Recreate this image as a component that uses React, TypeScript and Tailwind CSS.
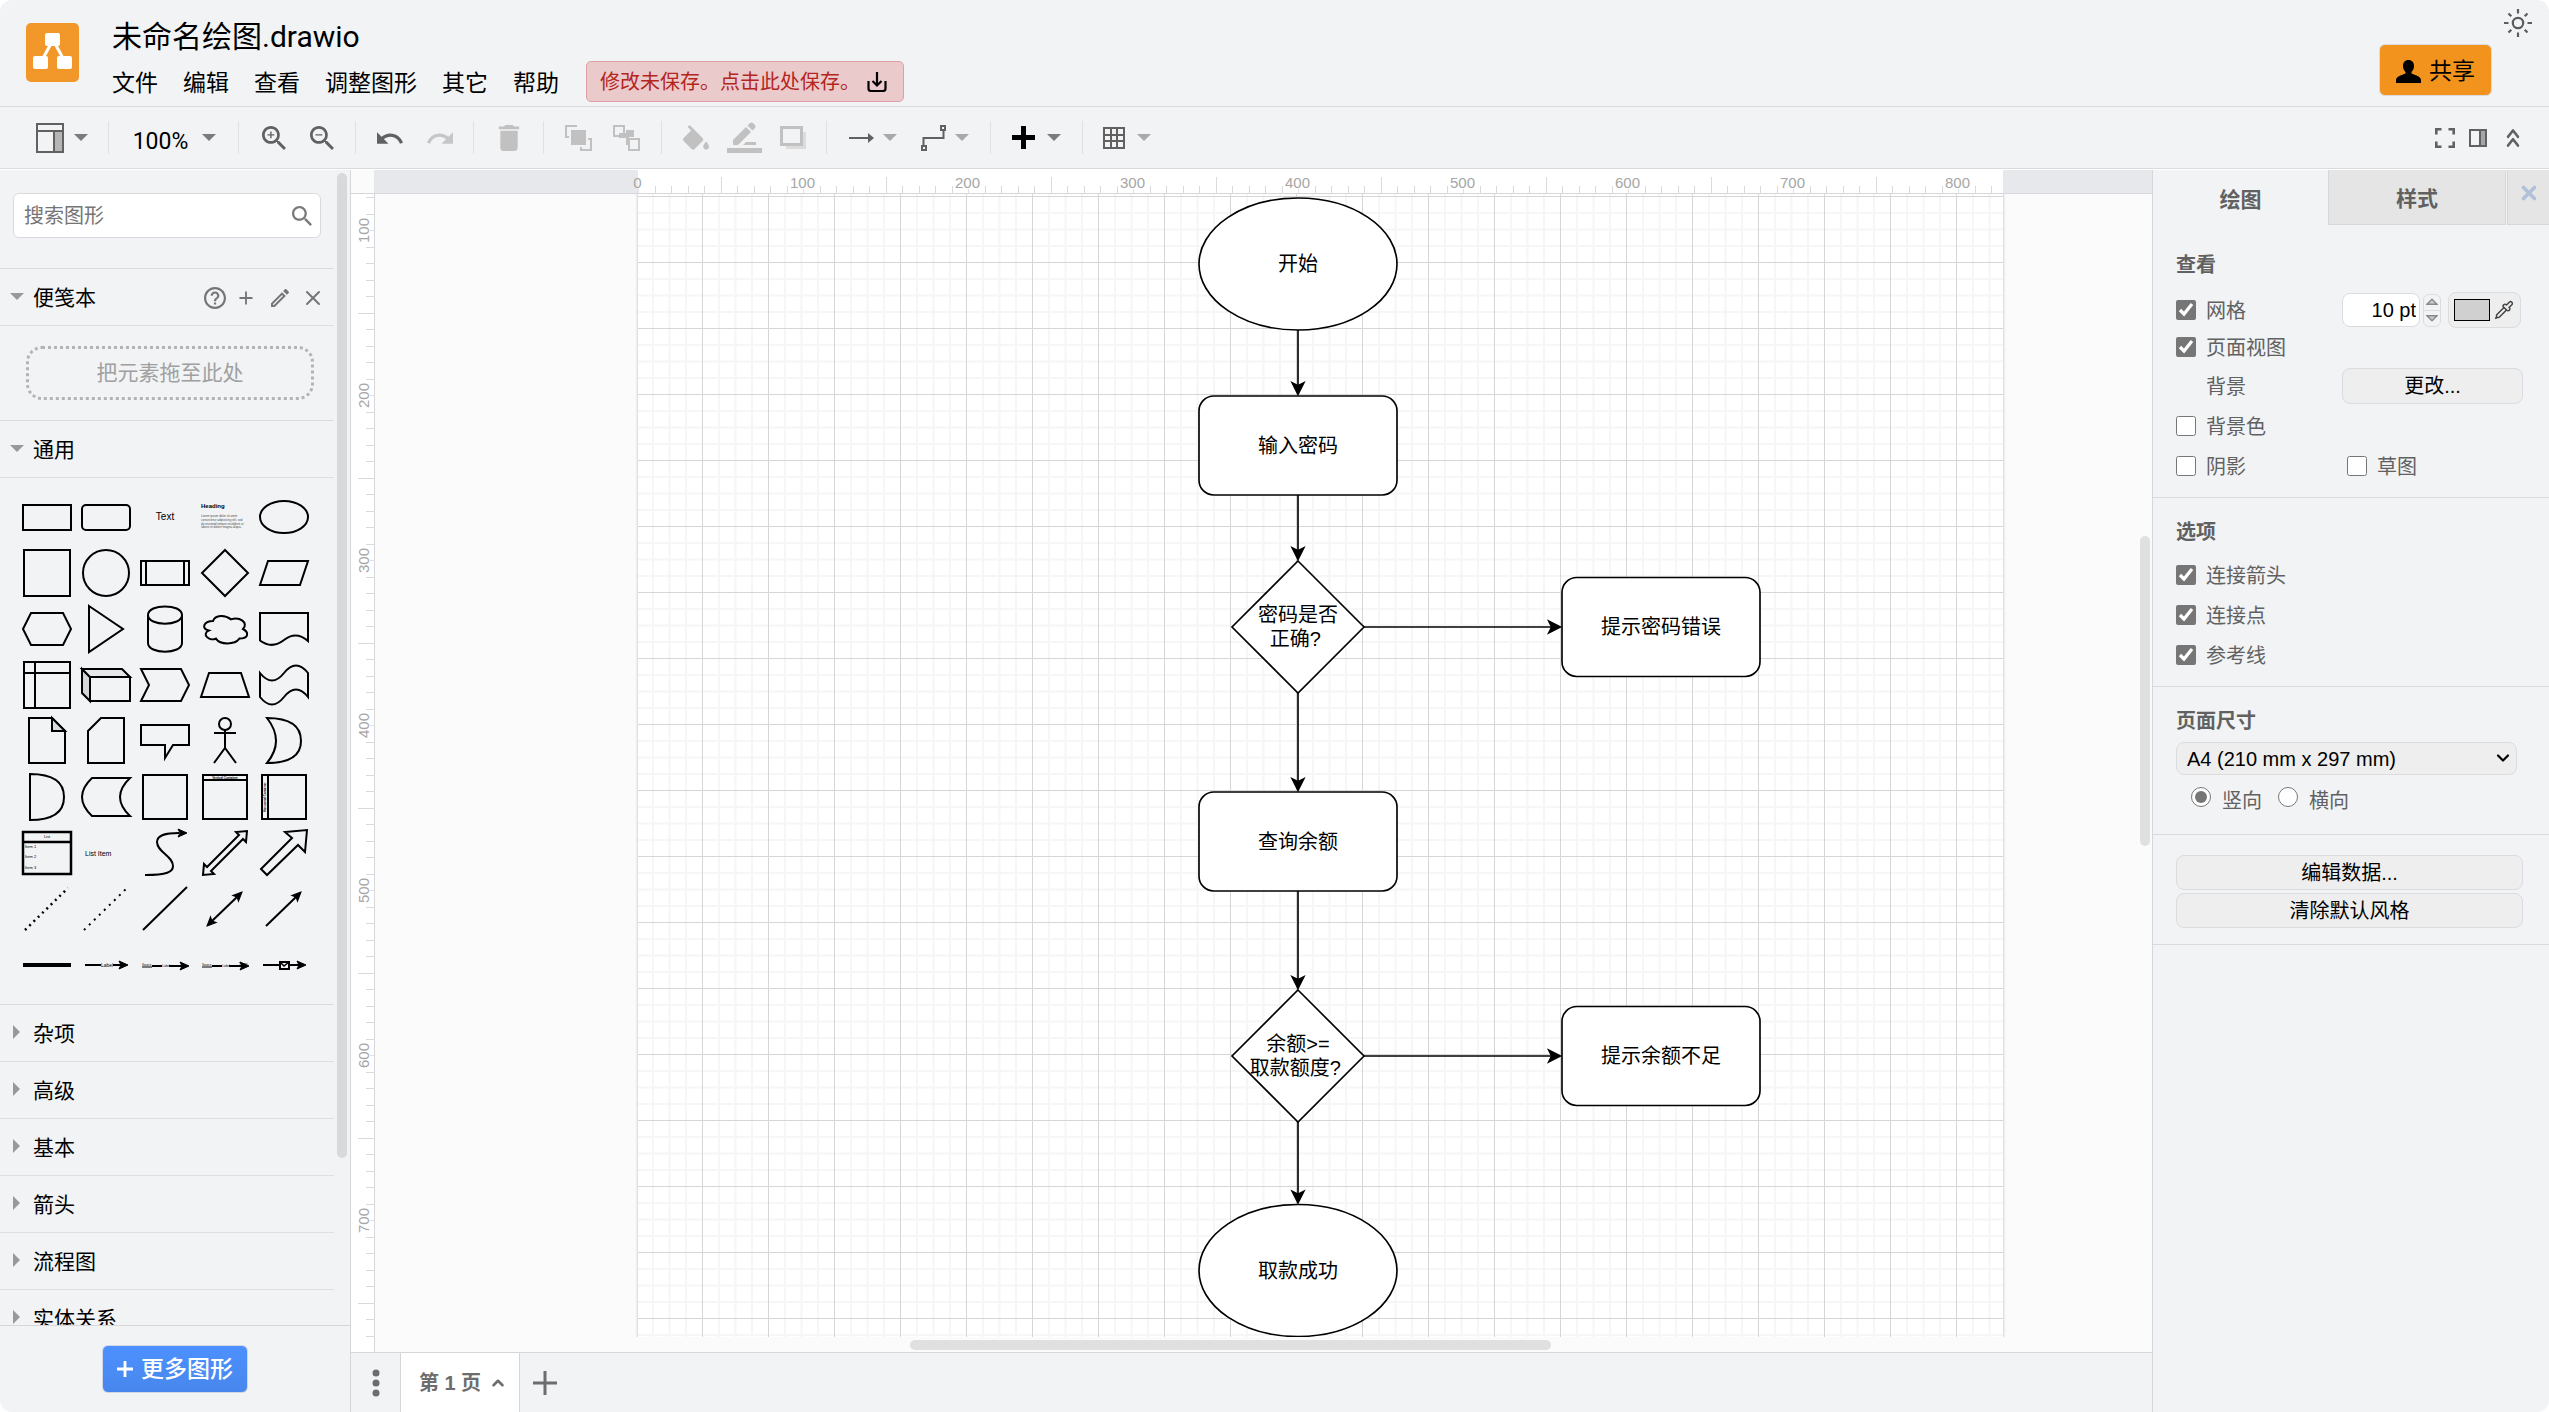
import { useState, type ReactNode } from 'react';
import { ChevronDown, ChevronUp, ChevronsUp, Pipette, Plus, X } from 'lucide-react';

const SCALE = 1.65;
const PAGE_W = 1365;
const PAGE_H = 1143;
const PAGE_TOP = 128;

const MENUS = ['文件', '编辑', '查看', '调整图形', '其它', '帮助'];
const SECTIONS = ['杂项', '高级', '基本', '箭头', '流程图', '实体关系'];

const ZOOM_D =
  'M15.5 14h-.79l-.28-.27C15.41 12.59 16 11.11 16 9.5 16 5.91 13.09 3 9.5 3S3 5.91 3 9.5 5.91 16 9.5 16c1.61 0 3.09-.59 4.23-1.57l.27.28v.79l5 4.99L20.49 19l-4.99-5zm-6 0C7.01 14 5 11.99 5 9.5S7.01 5 9.5 5 14 7.01 14 9.5 11.99 14 9.5 14z';

function Icon({ d, box, className }: { d: string; box: string; className: string }) {
  return (
    <svg viewBox={box} fill="currentColor" className={className} aria-hidden="true">
      <path d={d} />
    </svg>
  );
}

function Caret({ className = 'text-[#a9a9a9]' }: { className?: string }) {
  return <Icon d="M0 0H14L7 7Z" box="0 0 14 7" className={`h-[7px] w-3.5 shrink-0 ${className}`} />;
}

function Group({ className, children }: { className: string; children: ReactNode }) {
  return (
    <div className={`flex h-[33px] shrink-0 items-center justify-center border-r border-[#dfe1e4] ${className}`}>
      {children}
    </div>
  );
}

function Tool({ label, children, className = '' }: { label: string; children: ReactNode; className?: string }) {
  return (
    <button type="button" aria-label={label} className={`flex items-center ${className}`}>
      {children}
    </button>
  );
}

function Header() {
  return (
    <header className="flex h-[107px] shrink-0 items-start border-b border-[#d8dade] pl-[26px]">
      <svg viewBox="0 0 53 59" className="mt-[23px] h-[59px] w-[53px]" aria-hidden="true">
        <rect width="53" height="59" rx="5" fill="#f29729" />
        <path d="M27 17L16 37M27 17L38 37" stroke="#fff" strokeWidth="3" fill="none" />
        <rect x="19" y="10" width="15" height="13" rx="2" fill="#fff" />
        <rect x="7" y="33" width="15" height="13" rx="2" fill="#fff" />
        <rect x="31" y="33" width="15" height="13" rx="2" fill="#fff" />
      </svg>
      <div className="ml-[33px] pt-[15px]">
        <h1 className="font-['Roboto','Noto_Sans_CJK_SC',sans-serif] text-[30px] leading-[44px]">未命名绘图.drawio</h1>
        <div className="flex h-[45px] items-center">
          <nav className="flex gap-[25px] pt-1 text-[23px] leading-[41px]">
            {MENUS.map((m) => (
              <button type="button" key={m}>{m}</button>
            ))}
          </nav>
          <button
            type="button"
            className="ml-[27px] flex h-[41px] items-center gap-[7px] rounded-[5px] border border-[#dea0a5] bg-[#ebcacc] pr-4 pl-[13px] text-[20px] text-[#b3261e]"
          >
            修改未保存。点击此处保存。
            <svg viewBox="0 0 20 20" className="h-5 w-5 text-black" fill="none" stroke="currentColor" strokeWidth="2.2" aria-hidden="true">
              <path d="M1.500 9V16.500Q1.500 19 4 19H16Q18.500 19 18.500 16.500V9M10 0V13M5.500 9L10 13.500L14.500 9" />
            </svg>
          </button>
        </div>
      </div>
      <button
        type="button"
        className="mt-11 ml-auto flex h-[52px] w-[113px] items-center justify-center gap-2 rounded-md border border-[#d9dce0] bg-[#f2931e] pt-0.5 text-[23px]"
      >
        <Icon
          d="M12.500 0C16 0 18 2.500 18 6C18 8.500 17 10.500 15.500 12V13.500C19 15 25 16.500 25 20V23H0V20C0 16.500 6 15 9.500 13.500V12C8 10.500 7 8.500 7 6C7 2.500 9 0 12.500 0Z"
          box="0 0 25 23"
          className="h-[23px] w-[25px]"
        />
        共享
      </button>
      <button type="button" aria-label="外观" className="mt-[9px] mr-[17px] ml-3 text-[#5c5c5c]">
        <svg viewBox="-14 -14 28 28" className="h-7 w-7" fill="none" stroke="currentColor" strokeWidth="2.2" aria-hidden="true">
          <circle r="5.2" />
          <path d="M0-14V-9.500M0 14V9.500M-14 0H-9.500M14 0H9.500M-9.500-9.500L-6.700-6.700M9.500-9.500L6.700-6.700M-9.500 9.500L-6.700 6.700M9.500 9.500L6.700 6.700" />
        </svg>
      </button>
    </header>
  );
}

function Toolbar() {
  return (
    <div className="mt-0.5 flex h-[60px] shrink-0 items-center border-b border-[#d8dade] bg-[#f1f3f5] pb-0.5 text-[#616161]">
      <Group className="w-[109px] gap-2.5 pl-4">
        <Tool label="视图" className="gap-2.5">
          <svg viewBox="0 0 28 30" className="h-[30px] w-7" fill="none" stroke="currentColor" strokeWidth="2" aria-hidden="true">
            <rect x="19" y="9" width="8" height="20" fill="#b5b5b5" stroke="none" />
            <path d="M1 1H27V29H1ZM1 8H27M18 8V29" />
          </svg>
          <Caret className="text-[#7b7b7b]" />
        </Tool>
      </Group>
      <Group className="w-[130px]">
        <button type="button" className="flex items-center gap-3.5 pl-0.5 text-black">
          <span className="pt-[7px] font-['Roboto','Noto_Sans_CJK_SC',sans-serif] text-[23px] leading-[33px]">100%</span>
          <Caret className="text-[#7b7b7b]" />
        </button>
      </Group>
      <Group className="w-[117px] gap-6 pl-0.5">
        <Tool label="放大"><Icon d={`${ZOOM_D}M12 10h-2v2H9v-2H7V9h2V7h1v2h2v1z`} box="3 3 17.5 17.5" className="h-6 w-6" /></Tool>
        <Tool label="缩小"><Icon d={`${ZOOM_D}M7 9h5v1H7z`} box="3 3 17.5 17.5" className="h-6 w-6" /></Tool>
      </Group>
      <Group className="w-[118px] gap-6">
        <Tool label="撤消">
          <Icon d="M12.500 8c-2.650 0-5.050.990-6.900 2.600L2 7v9h9l-3.620-3.620c1.390-1.160 3.160-1.880 5.120-1.880 3.540 0 6.550 2.310 7.600 5.500l2.370-.780C21.080 11.030 17.150 8 12.500 8z" box="2 7 20.5 9" className="h-3 w-[26px]" />
        </Tool>
        <Tool label="重做" className="text-[#c6c6c6]">
          <Icon d="M18.400 10.600C16.550 8.990 14.150 8 11.500 8c-4.650 0-8.580 3.030-9.960 7.220L3.900 16c1.050-3.190 4.050-5.500 7.600-5.500 1.950 0 3.730.720 5.120 1.880L13 16h9V7l-3.600 3.600z" box="1.5 7 20.5 9" className="h-3 w-[26px]" />
        </Tool>
      </Group>
      <Group className="w-[70px] text-[#c1c1c1]">
        <Tool label="删除">
          <Icon d="M6 19c0 1.100.900 2 2 2h8c1.100 0 2-.900 2-2V7H6v12zM19 4h-3.500l-1-1h-5l-1 1H5v2h14V4z" box="4 3 16 18" className="h-[26px] w-6" />
        </Tool>
      </Group>
      <Group className="w-[118px] gap-[21px] text-[#c1c1c1]">
        <Tool label="移至最前">
          <svg viewBox="0 0 27 26" className="h-[26px] w-[27px]" fill="none" stroke="currentColor" strokeWidth="2" aria-hidden="true">
            <path d="M11 2V1H1V12H4M16 22V25H26V14H23" />
            <rect x="6" y="5" width="15" height="15" fill="currentColor" stroke="none" />
          </svg>
        </Tool>
        <Tool label="移至最后">
          <svg viewBox="0 0 27 26" className="h-[26px] w-[27px]" fill="none" stroke="currentColor" strokeWidth="2" aria-hidden="true">
            <path d="M13 5H21V12H16V20H13V13H6V8H13Z" fill="currentColor" stroke="none" />
            <path d="M1 1H11V11H1ZM16 14H26V25H16Z" />
          </svg>
        </Tool>
      </Group>
      <Group className="w-[165px] gap-[18px] text-[#c1c1c1]">
        <Tool label="填充颜色">
          <Icon d="M16.560 8.940L7.620 0 6.210 1.410l2.380 2.380-5.150 5.150c-.590.590-.590 1.540 0 2.120l5.500 5.500c.290.290.680.440 1.060.440s.770-.150 1.060-.440l5.500-5.500c.590-.580.590-1.530 0-2.120zM19 11.500s-2 2.170-2 3.500c0 1.100.900 2 2 2s2-.900 2-2c0-1.330-2-3.500-2-3.500z" box="3 0 18 18" className="h-[26px] w-[26px]" />
        </Tool>
        <Tool label="线条颜色">
          <svg viewBox="0 0 35 31" className="h-[31px] w-[35px]" fill="currentColor" aria-hidden="true">
            <path d="M6 18L19 5L24 10L11 23H6ZM20.500 3.500L23 1Q24.500 0 26 1L28 3Q29 4.500 28 6L25.500 8.500ZM16 23L19 20H29V23Z" />
            <rect y="26" width="35" height="5" />
          </svg>
        </Tool>
        <Tool label="阴影">
          <svg viewBox="0 0 26 23" className="h-[23px] w-[26px]" aria-hidden="true">
            <rect x="6" y="6" width="20" height="17" fill="#dcdcdc" />
            <rect x="1.5" y="1.5" width="20" height="17" fill="#f1f3f5" stroke="currentColor" strokeWidth="3" />
          </svg>
        </Tool>
      </Group>
      <Group className="w-[164px] gap-6">
        <Tool label="连线" className="gap-[9px]">
          <svg viewBox="0 0 25 10" className="h-2.5 w-[25px]" aria-hidden="true">
            <path d="M0 5H20" stroke="currentColor" strokeWidth="2" />
            <path d="M19 0L25 5L19 10Z" fill="currentColor" />
          </svg>
          <Caret />
        </Tool>
        <Tool label="航点" className="gap-[9px]">
          <svg viewBox="0 0 25 26" className="h-[26px] w-[25px]" fill="none" stroke="currentColor" strokeWidth="2" aria-hidden="true">
            <path d="M2.500 20V13H22.500V6M1 21H5V25H1ZM20 1H24V5H20Z" />
          </svg>
          <Caret />
        </Tool>
      </Group>
      <Group className="w-[92px]">
        <Tool label="插入" className="gap-3 text-black">
          <Icon d="M9 0H14V9H23V14H14V23H9V14H0V9H9Z" box="0 0 23 23" className="h-[23px] w-[23px]" />
          <Caret className="text-[#7b7b7b]" />
        </Tool>
      </Group>
      <Tool label="表格" className="ml-5 gap-3">
        <svg viewBox="0 0 22 22" className="h-[22px] w-[22px]" fill="none" stroke="currentColor" strokeWidth="2" aria-hidden="true">
          <path d="M1 1H21V21H1ZM8 1V21M14 1V21M1 8H21M1 14H21" />
        </svg>
        <Caret />
      </Tool>
      <div className="mr-6 ml-auto flex items-center gap-3.5">
        <Tool label="全屏">
          <svg viewBox="0 0 20 20" className="h-5 w-5" fill="none" stroke="currentColor" strokeWidth="2.6" aria-hidden="true">
            <path d="M1.300 6.500V1.300H6.500M13.500 1.300H18.700V6.500M18.700 13.500V18.700H13.500M6.500 18.700H1.300V13.500" />
          </svg>
        </Tool>
        <Tool label="格式">
          <svg viewBox="0 0 18 18" className="h-[18px] w-[18px]" fill="none" stroke="currentColor" strokeWidth="2" aria-hidden="true">
            <rect x="11" y="1" width="6" height="16" fill="#a5a5a5" />
            <rect x="1" y="1" width="16" height="16" />
          </svg>
        </Tool>
        <Tool label="收缩/展开">
          <ChevronsUp className="h-[30px] w-6" strokeWidth={2.4} preserveAspectRatio="none" />
        </Tool>
      </div>
    </div>
  );
}

// Arrow head with its tip at x, y
function Head({ x, y, angle = 0 }: { x: number; y: number; angle?: number }) {
  return <path d="M0 0L-9-4L-7 0L-9 4Z" fill="#000" strokeWidth="1" transform={`translate(${x} ${y}) rotate(${angle})`} />;
}

function Tiny({ x, y, size, children, bold, middle }: { x: number; y: number; size: number; children: string; bold?: boolean; middle?: boolean }) {
  return (
    <text x={x} y={y} fontSize={size} fontWeight={bold ? 700 : 400} textAnchor={middle ? 'middle' : 'start'} fill="#000" stroke="none">
      {children}
    </text>
  );
}

const SHAPES: ReactNode[] = [
  <rect x="-24" y="-12" width="48" height="25" />,
  <rect x="-24" y="-12" width="48" height="25" rx="4" />,
  <Tiny x={0} y={3} size={10} middle>Text</Tiny>,
  <>
    <Tiny x={-24} y={-9} size={6} bold>Heading</Tiny>
    <g opacity="0.7">
      <Tiny x={-24} y={0} size={3}>Lorem ipsum dolor sit amet</Tiny>
      <Tiny x={-24} y={4} size={3}>consectetur adipisicing elit, sed</Tiny>
      <Tiny x={-24} y={8} size={3}>do eiusmod tempor incididunt ut</Tiny>
      <Tiny x={-24} y={11} size={3}>labore et dolore magna aliqua.</Tiny>
    </g>
  </>,
  <ellipse rx="24" ry="16" />,
  <rect x="-23" y="-23" width="46" height="46" />,
  <circle r="23" />,
  <path d="M-24-12H24V12H-24ZM-19-12V12M19-12V12" />,
  <path d="M0-23L23 0L0 23L-23 0Z" />,
  <path d="M-24 12L-16-12H24L16 12Z" />,
  <path d="M-24 0L-16-16H16L24 0L16 16H-16Z" />,
  <path d="M-17-23L17 0L-17 23Z" />,
  <path d="M-17-14C-17-25.500 17-25.500 17-14V14C17 25.500-17 25.500-17 14ZM-17-14C-17-2.500 17-2.500 17-14" />,
  <path d="M-12-8C-21.600-8-24 0-16.300 1.600C-24 5.100-15.400 12.800-9.100 9.600C-4.800 16 9.600 16 14.400 9.600C24 9.600 24 3.200 18 0C24-6.400 14.400-12.800 6-9.600C0-14.400-9.600-14.400-12-8Z" />,
  <path d="M-24-16H24V12Q12 1.500 0 11T-24 11.500Z" />,
  <path d="M-23-23H23V23H-23ZM-12-23V23M-23-12H23" />,
  <>
    <path d="M-24-16L-16-8V16L-24 8Z" fill="#d3d5d8" />
    <path d="M-24-16H16L24-8H-16Z" fill="#e5e7e9" />
    <path d="M-16-8H24V16H-16Z" />
  </>,
  <path d="M-24-16H16L24 0L16 16H-24L-16 0Z" />,
  <path d="M-24 12L-16-12H16L24 12Z" />,
  <path d="M-24-12Q-12 3 0-12T24-12V12Q12-3 0 12T-24 12Z" />,
  <>
    <path d="M-18-23H5L18-10V22H-18Z" />
    <path d="M5-23V-10H18Z" fill="#d9dbdd" />
  </>,
  <path d="M-5-23H18V22H-18V-10Z" />,
  <path d="M-24-16H24V4H8L0 17V4H-24Z" />,
  <>
    <circle cy="-17" r="6" />
    <path d="M0-11V7M-11-8H11M-11 22L0 7L11 22" />
  </>,
  <path d="M-17-23Q17-23 17 0Q17 22-17 22Q1 0-17-23Z" />,
  <path d="M-17-23Q17-23 17 0Q17 23-17 23Z" />,
  <path d="M-14-19H24Q4 0 24 19H-14Q-34 0-14-19Z" />,
  <rect x="-22" y="-22" width="44" height="44" />,
  <>
    <path d="M-22-22H22V22H-22ZM-22-17H22" />
    <Tiny x={0} y={-18} size={3} bold middle>Vertical Container</Tiny>
  </>,
  <>
    <path d="M-22-22H22V22H-22ZM-16-22V22" />
    <g transform="rotate(-90)"><Tiny x={0} y={-18} size={3} bold middle>Horizontal Container</Tiny></g>
  </>,
  <>
    <path d="M-24-21H24V21H-24ZM-24-11H24" strokeWidth="2.500" />
    <Tiny x={0} y={-15} size={4} middle>List</Tiny>
    <Tiny x={-22} y={-5} size={4}>Item 1</Tiny>
    <Tiny x={-22} y={5} size={4}>Item 2</Tiny>
    <Tiny x={-22} y={16} size={4}>Item 3</Tiny>
  </>,
  <Tiny x={-21} y={3} size={7}>List Item</Tiny>,
  <>
    <path d="M-20 22C2 22 8 19 8 13C8 3-8-1-8-11C-8-18 0-20 14-20" />
    <Head x={22} y={-20} />
  </>,
  <path d="M22-22L21-11L18-14L-14 18L-11 21L-22 22L-21 11L-18 14L14-18L11-21Z" />,
  <path d="M23-23L21-1L14-8L-17 22L-23 16L8-15L1-21Z" />,
  <path d="M-22 21L21-21" strokeDasharray="2 4" strokeWidth="2.500" />,
  <path d="M-22 21L20-20" strokeDasharray="2 5" />,
  <path d="M-22 21L22-22" />,
  <>
    <path d="M-13 12L12-12" />
    <Head x={17} y={-17} angle={-45} />
    <Head x={-18} y={17} angle={135} />
  </>,
  <>
    <path d="M-18 17L12-12" />
    <Head x={17} y={-17} angle={-45} />
  </>,
  <path d="M-24 0H24" strokeWidth="4" />,
  <>
    <path d="M-21 0H-5M7 0H16" />
    <Head x={22} y={0} />
    <Tiny x={1} y={2} size={5} middle>Label</Tiny>
  </>,
  <>
    <path d="M-13 1H-3M4 1H18" />
    <Head x={24} y={1} />
    <Tiny x={-23} y={1} size={3}>Source</Tiny>
    <Tiny x={1} y={2} size={3} middle>Label</Tiny>
    <path d="M-23 2H-13" strokeWidth="1" />
  </>,
  <>
    <path d="M-13 1H-3M4 1H18" />
    <Head x={24} y={1} />
    <Tiny x={-23} y={1} size={3}>Source</Tiny>
    <Tiny x={1} y={2} size={3} middle>Label</Tiny>
    <Tiny x={14} y={0} size={3}>Target</Tiny>
    <path d="M-23 2H-13" strokeWidth="1" />
  </>,
  <>
    <path d="M-21 0H15" />
    <Head x={22} y={0} />
    <rect x="-4" y="-3" width="9" height="7" fill="#f1f3f5" />
    <path d="M-4-3L0 1L5-3" strokeWidth="1.500" />
  </>,
];

function SectionTitle({ title, open, children }: { title: string; open?: boolean; children?: ReactNode }) {
  return (
    <div className="flex h-[57px] items-center border-b border-[#dddfe2] pt-0.5">
      <button type="button" className="flex items-center text-[21px]" aria-expanded={!!open}>
        <span className="flex w-[33px] justify-center pb-1 text-[#999]">
          {open ? (
            <Caret className="text-[#999]" />
          ) : (
            <Icon d="M0 0L7 7L0 14Z" box="0 0 7 14" className="h-3.5 w-[7px]" />
          )}
        </span>
        {title}
      </button>
      {children}
    </div>
  );
}

function Sidebar() {
  return (
    <aside className="flex w-[351px] shrink-0 flex-col border-r border-[#d5d7db]">
      <div className="relative min-h-0 flex-1 overflow-hidden">
        <div className="w-[334px]">
          <div className="border-b border-[#d8dade] pt-[23px] pr-[13px] pb-[30px] pl-[13px]">
            <label className="flex h-[45px] items-center rounded-md border border-[#d8dade] bg-white pr-2 pl-2.5">
              <input type="text" aria-label="搜索图形" placeholder="搜索图形" className="min-w-0 flex-1 text-[20px] outline-none placeholder:text-[#757575]" />
              <Icon d={ZOOM_D} box="3 3 17.5 17.5" className="h-5 w-5 text-[#7a7a7a]" />
            </label>
          </div>
          <SectionTitle title="便笺本" open>
            <div className="mr-[9px] ml-auto flex items-center text-[#757575]">
              <Tool label="帮助" className="mr-2.5">
                <Icon d="M11 18h2v-2h-2v2zm1-16C6.480 2 2 6.480 2 12s4.480 10 10 10 10-4.480 10-10S17.520 2 12 2zm0 18c-4.410 0-8-3.590-8-8s3.590-8 8-8 8 3.590 8 8-3.590 8-8 8zm0-14c-2.210 0-4 1.790-4 4h2c0-1.100.900-2 2-2s2 .900 2 2c0 2-3 1.750-3 5h2c0-2.250 3-2.500 3-5 0-2.210-1.790-4-4-4z" box="2 2 20 20" className="h-[22px] w-[22px]" />
              </Tool>
              <Tool label="添加" className="mr-[15px]"><Plus className="h-5 w-5" strokeWidth={2.2} /></Tool>
              <Tool label="编辑" className="mr-3">
                <Icon d="M14.060 9.020l.920.920L5.920 19H5v-.920l9.060-9.060M17.660 3c-.250 0-.510.100-.700.290l-1.830 1.830 3.750 3.750 1.830-1.830c.390-.390.390-1.020 0-1.410l-2.340-2.340c-.200-.200-.450-.290-.710-.290zm-3.600 3.190L3 17.250V21h3.750L17.810 9.940l-3.750-3.750z" box="3 3 18 18" className="h-[18px] w-[18px]" />
              </Tool>
              <Tool label="关闭"><X className="h-6 w-6" strokeWidth={2} /></Tool>
            </div>
          </SectionTitle>
          <div className="border-b border-[#d8dade] pt-5 pr-5 pb-5 pl-[26px]">
            <div className="flex h-[54px] items-center justify-center rounded-2xl border-3 border-dotted border-[#b3b3b3] text-[21px] text-[#a0a0a0]">
              把元素拖至此处
            </div>
          </div>
          <SectionTitle title="通用" open />
          <div className="border-b border-[#d8dade] pt-[11px] pr-5 pb-[11px] pl-[17px]">
            <div className="grid auto-rows-[56px] grid-cols-5">
              {SHAPES.map((shape, i) => (
                <button type="button" key={i} aria-label={`图形 ${i + 1}`} className="flex items-center justify-center">
                  <svg viewBox="-28 -26 56 52" className="h-[52px] w-14 font-['Liberation_Sans',sans-serif]" fill="none" stroke="#000" strokeWidth="2">
                    {shape}
                  </svg>
                </button>
              ))}
            </div>
          </div>
          {SECTIONS.map((s) => (
            <SectionTitle key={s} title={s} />
          ))}
        </div>
        <div className="absolute top-[3px] right-[3px] h-[985px] w-2.5 rounded-full bg-[#d8d9db]" />
      </div>
      <div className="flex h-[87px] shrink-0 items-start justify-center border-t border-[#d5d7db] pt-[19px]">
        <button
          type="button"
          className="flex h-12 items-center gap-2 rounded-md border border-[#d0d8e6] bg-linear-to-b from-[#4d90fe] to-[#4787ed] px-3.5 text-[23px] font-medium text-white"
        >
          <Icon d="M7 0H10V7H17V10H10V17H7V10H0V7H7Z" box="0 0 17 17" className="h-4 w-4" />
          更多图形
        </button>
      </div>
    </aside>
  );
}

function HorizontalRuler() {
  const ticks = Array.from({ length: 83 }, (_, i) => i);
  return (
    <svg width={PAGE_W} height="23" className="overflow-visible bg-white font-['Liberation_Sans',sans-serif]">
      {ticks.map((i) => {
        const x = Math.round(i * 10 * SCALE) + 0.5;
        if (i % 10 === 0) {
          return (
            <g key={i}>
              <path d={`M${x} 19V23`} stroke="#e0e1e5" strokeWidth="1" />
              <text x={x - 1} y="18" fontSize="15" textAnchor="middle" fill="#a6a6a6">{i * 10}</text>
            </g>
          );
        }
        return <path key={i} d={`M${x} ${i % 5 === 0 ? 7 : 16}V23`} stroke="#d8dade" strokeWidth="1" />;
      })}
    </svg>
  );
}

function VerticalRuler() {
  const ticks = Array.from({ length: 71 }, (_, i) => i + 8);
  return (
    <svg width="23" height="1158" className="block bg-white font-['Liberation_Sans',sans-serif]">
      {ticks.map((i) => {
        const y = Math.round(i * 10 * SCALE - PAGE_TOP) - 0.5;
        if (i % 10 === 0) {
          return (
            <g key={i}>
              <path d={`M19 ${y}H23`} stroke="#e0e1e5" strokeWidth="1" />
              <text fontSize="15" textAnchor="middle" fill="#a6a6a6" transform={`translate(18 ${y}) rotate(-90)`}>{i * 10}</text>
            </g>
          );
        }
        return <path key={i} d={`M${i % 5 === 0 ? 7 : 15} ${y}H23`} stroke="#d8dade" strokeWidth="1" />;
      })}
    </svg>
  );
}

type Node = { kind: 'ellipse' | 'box' | 'diamond'; x: number; y: number; lines: string[] };

const NODES: Node[] = [
  { kind: 'ellipse', x: 400, y: 120, lines: ['开始'] },
  { kind: 'box', x: 400, y: 230, lines: ['输入密码'] },
  { kind: 'diamond', x: 400, y: 340, lines: ['密码是否', '正确?\u00a0'] },
  { kind: 'box', x: 620, y: 340, lines: ['提示密码错误'] },
  { kind: 'box', x: 400, y: 470, lines: ['查询余额'] },
  { kind: 'diamond', x: 400, y: 600, lines: ['余额>=', '取款额度?\u00a0'] },
  { kind: 'box', x: 620, y: 600, lines: ['提示余额不足'] },
  { kind: 'ellipse', x: 400, y: 730, lines: ['取款成功'] },
];

const EDGES = [
  [400, 160, 400, 200],
  [400, 260, 400, 300],
  [440, 340, 560, 340],
  [400, 380, 400, 440],
  [400, 500, 400, 560],
  [440, 600, 560, 600],
  [400, 640, 400, 690],
];

function Page() {
  const columns = Array.from({ length: 82 }, (_, i) => i + 1);
  const rows = Array.from({ length: 70 }, (_, i) => i);
  return (
    <svg width={PAGE_W} height={PAGE_H} className="block bg-white shadow-[0_0_2px_1px_#d5d5d5]">
      <g stroke="#f6f6f6" strokeWidth="2">
        {columns.filter((i) => i % 4).map((i) => <path key={i} d={`M${i * 16.5 - 1.5} 0V${PAGE_H}`} />)}
        {rows.filter((i) => i % 4).map((i) => <path key={i} d={`M0 ${i * 16.5 + 2.5}H${PAGE_W}`} />)}
      </g>
      <g stroke="#d6d6d6" strokeWidth="1">
        {columns.filter((i) => i % 4 === 0).map((i) => <path key={i} d={`M${i * 16.5 - 1.5} 0V${PAGE_H}`} />)}
        {rows.filter((i) => i % 4 === 0).map((i) => <path key={i} d={`M0 ${i * 16.5 + 2.5}H${PAGE_W}`} />)}
      </g>
      <g transform={`translate(0 ${-PAGE_TOP})`}>
        <g transform={`scale(${SCALE})`} stroke="#000" strokeWidth="1">
          {EDGES.map(([x1, y1, x2, y2], i) => {
            const down = x1 === x2;
            return (
              <g key={i}>
                <path d={down ? `M${x1} ${y1}V${y2 - 6}` : `M${x1} ${y1}H${x2 - 6}`} />
                <path d="M-1 0L-8-3.500L-6.200 0L-8 3.500Z" transform={`translate(${x2} ${y2}) rotate(${down ? 90 : 0})`} />
              </g>
            );
          })}
          {NODES.map(({ kind, x, y }, i) => {
            if (kind === 'ellipse') return <ellipse key={i} cx={x} cy={y} rx="60" ry="40" fill="#fff" />;
            if (kind === 'box') return <rect key={i} x={x - 60} y={y - 30} width="120" height="60" rx="9" fill="#fff" />;
            return <path key={i} d={`M${x} ${y - 40}L${x + 40} ${y}L${x} ${y + 40}L${x - 40} ${y}Z`} fill="#fff" />;
          })}
        </g>
        {NODES.map(({ x, y, lines }) =>
          lines.map((line, i) => (
            <text key={line} x={x * SCALE} y={y * SCALE + 7 + i * 24 - (lines.length - 1) * 12} fontSize="20" textAnchor="middle">
              {line}
            </text>
          )),
        )}
      </g>
    </svg>
  );
}

function Canvas() {
  return (
    <main className="flex min-w-0 flex-1 flex-col">
      <div className="relative flex min-h-0 flex-1 flex-col overflow-hidden bg-[#fbfbfb]">
        <div className="flex h-6 shrink-0 border-b border-[#d5d7dc]">
          <div className="w-6 shrink-0 border-r border-[#e6e8ec]" />
          <div className="min-w-0 flex-1 bg-[#e6e8ec] pl-[263px]">
            <HorizontalRuler />
          </div>
        </div>
        <div className="flex min-h-0 flex-1">
          <div className="w-6 shrink-0 border-r border-[#d5d7dc] bg-white">
            <VerticalRuler />
          </div>
          <div className="min-w-0 flex-1 overflow-hidden pl-[263px]">
            <Page />
          </div>
        </div>
        <div className="absolute bottom-0 left-6 flex h-[15px] w-full bg-[#fbfbfb] pt-[3px] pl-[535px]">
          <div className="h-2.5 w-[641px] rounded-full bg-[#e0e0e0]" />
        </div>
        <div className="absolute top-[366px] right-0.5 h-[310px] w-2.5 rounded-full bg-[#e0e0e0]" />
      </div>
      <div className="flex h-[60px] shrink-0 items-stretch border-t border-[#d5d7db] text-[#6d6d6d]">
        <button type="button" aria-label="页面" className="flex w-[50px] items-center justify-center border-r border-[#d5d7db]">
          <svg viewBox="0 0 8 28" className="h-7 w-2" fill="currentColor" aria-hidden="true">
            <circle cx="4" cy="4" r="3.5" />
            <circle cx="4" cy="14" r="3.5" />
            <circle cx="4" cy="24" r="3.5" />
          </svg>
        </button>
        <button type="button" className="flex w-[119px] items-center justify-center gap-2 border-r border-[#d5d7db] bg-white pl-1.5 text-[20px] font-bold">
          第 1 页
          <ChevronUp className="h-[18px] w-[18px]" strokeWidth={3.4} />
        </button>
        <button type="button" aria-label="插入页面" className="ml-[13px]">
          <Icon d="M10.500 0H13.500V10.500H24V13.500H13.500V24H10.500V13.500H0V10.500H10.500Z" box="0 0 24 24" className="h-6 w-6" />
        </button>
      </div>
    </main>
  );
}

function Check({ label, on = false }: { label: string; on?: boolean }) {
  const [checked, setChecked] = useState(on);
  return (
    <label className="flex items-center gap-2.5">
      <input type="checkbox" checked={checked} onChange={(e) => setChecked(e.target.checked)} className="h-5 w-5 accent-[#767676]" />
      <span className="pt-0.5">{label}</span>
    </label>
  );
}

function Radio({ label, on }: { label: string; on?: boolean }) {
  return (
    <label className="flex items-center gap-[11px]">
      <input type="radio" name="orientation" defaultChecked={on} className="mb-1 h-5 w-5 accent-[#767676]" />
      <span className="pt-1">{label}</span>
    </label>
  );
}

const FIELD = 'rounded-lg border border-[#dadce0] bg-[#eee] text-black';

function FormatPanel() {
  return (
    <aside className="w-[397px] shrink-0 border-l border-[#d5d7db] text-[20px] text-[#616161]">
      <div className="flex h-[55px] text-[21px] font-bold">
        <button type="button" className="w-[175px] pt-1">绘图</button>
        <button type="button" className="w-[178px] border-x border-b border-[#d5d7db] bg-[#e5e5e5] pt-1">样式</button>
        <button type="button" aria-label="关闭" className="ml-px flex flex-1 items-center justify-center border-b border-l border-[#d5d7db] bg-[#e5e5e5] pb-2 text-[#b0c1d9]">
          <X className="h-[22px] w-[22px]" strokeWidth={4} />
        </button>
      </div>

      <section className="border-b border-[#d8dade] pt-[25px] pr-[26px] pb-[11px] pl-[23px]">
        <h2 className="leading-[30px] font-bold">查看</h2>
        <div className="mt-3 flex h-9 items-center justify-between">
          <Check label="网格" on />
          <div className="flex w-[181px] items-center">
            <input type="text" aria-label="网格尺寸" defaultValue="10 pt" className="h-[34px] w-[78px] rounded-lg border border-[#dadce0] bg-white pr-[3px] text-right text-black" />
            <div className="ml-[3px] flex h-[33px] w-[18px] flex-col rounded-md border border-[#dadce0] text-[#8a8a8a]">
              <button type="button" aria-label="增加" className="flex flex-1 items-center justify-center border-b border-[#dadce0]">
                <svg viewBox="0 0 13 8" className="h-2 w-3" aria-hidden="true"><path d="M1 6.500L6.500 1L12 6.500Z" fill="#ccc" stroke="currentColor" strokeWidth="1.500" /></svg>
              </button>
              <button type="button" aria-label="减少" className="flex flex-1 items-center justify-center">
                <svg viewBox="0 0 13 8" className="h-2 w-3" aria-hidden="true"><path d="M1 1.500L6.500 7L12 1.500Z" fill="#ccc" stroke="currentColor" strokeWidth="1.500" /></svg>
              </button>
            </div>
            <button type="button" aria-label="网格颜色" className={`ml-[7px] flex h-9 w-[73px] items-center gap-1 pl-[5px] ${FIELD}`}>
              <span className="h-[22px] w-9 border border-black bg-[#d0d0d0]" />
              <Pipette className="h-5 w-5 text-[#444]" strokeWidth={1.8} />
            </button>
          </div>
        </div>
        <div className="flex h-[38px] items-center">
          <Check label="页面视图" on />
        </div>
        <div className="flex h-10 items-center justify-between">
          <span className="pt-0.5 pl-[30px]">背景</span>
          <button type="button" className={`h-9 w-[181px] ${FIELD}`}>更改...</button>
        </div>
        <div className="flex h-10 items-center">
          <Check label="背景色" />
        </div>
        <div className="grid h-10 grid-cols-[171px_1fr] items-center">
          <Check label="阴影" />
          <Check label="草图" />
        </div>
      </section>

      <section className="border-b border-[#d8dade] pt-[19px] pb-[11px] pl-[23px]">
        <h2 className="mb-2 leading-[30px] font-bold">选项</h2>
        {['连接箭头', '连接点', '参考线'].map((label) => (
          <div key={label} className="flex h-10 items-center">
            <Check label={label} on />
          </div>
        ))}
      </section>

      <section className="border-b border-[#d8dade] pt-[19px] pr-8 pb-[15px] pl-[23px]">
        <h2 className="leading-[30px] font-bold">页面尺寸</h2>
        <div className="relative mt-[6px]">
          <select aria-label="页面尺寸" className={`h-[33px] w-full appearance-none pl-2.5 ${FIELD}`}>
            <option>A4 (210 mm x 297 mm)</option>
          </select>
          <ChevronDown className="pointer-events-none absolute top-1.5 right-1 h-5 w-5 text-black" strokeWidth={2.6} />
        </div>
        <div className="mt-1 flex h-10 items-center gap-4 pl-[15px]">
          <Radio label="竖向" on />
          <Radio label="横向" />
        </div>
      </section>

      <section className="flex flex-col gap-[3px] border-b border-[#d8dade] pt-5 pr-[26px] pb-4 pl-[23px]">
        <button type="button" className={`h-[35px] ${FIELD}`}>编辑数据...</button>
        <button type="button" className={`h-[35px] ${FIELD}`}>清除默认风格</button>
      </section>
    </aside>
  );
}

export default function App() {
  return (
    <div className="flex h-screen flex-col overflow-hidden rounded-xl bg-[#f1f3f5] font-['Liberation_Sans','Noto_Sans_CJK_SC',sans-serif] text-black">
      <Header />
      <Toolbar />
      <div className="flex min-h-0 flex-1 border-t border-white">
        <Sidebar />
        <Canvas />
        <FormatPanel />
      </div>
    </div>
  );
}
